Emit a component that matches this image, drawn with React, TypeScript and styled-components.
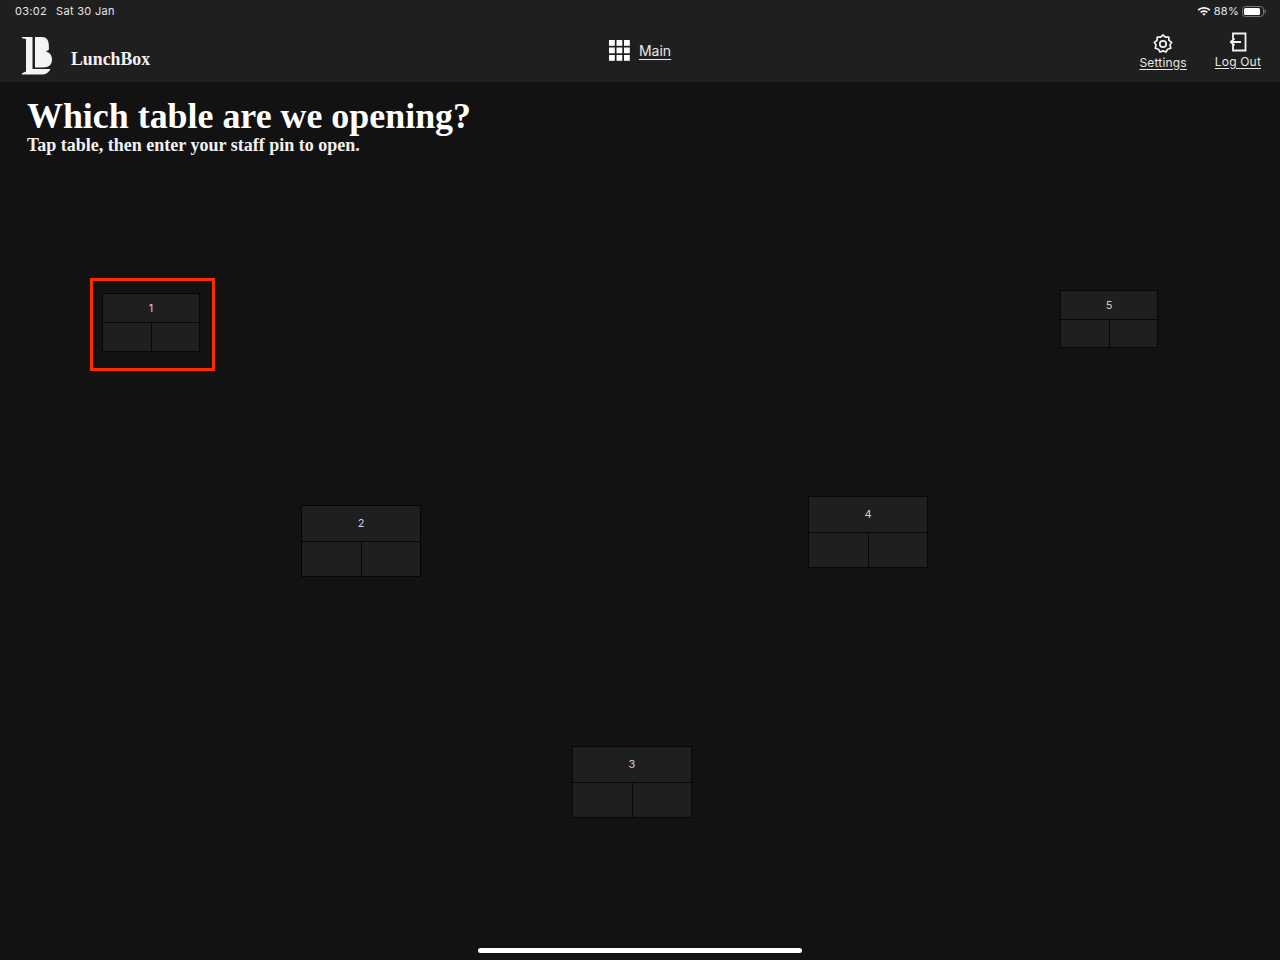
import React from "react";
import styled, { createGlobalStyle } from "styled-components";

const Global = createGlobalStyle`
  html, body { margin: 0; padding: 0; background: #121212; }
  body { font-family: "Inter", "Liberation Sans", sans-serif; color: #fff; }
`;

const Page = styled.div`
  width: 1280px;
  height: 960px;
  position: relative;
  overflow: hidden;
  background: #121212;
  display: flex;
  flex-direction: column;
`;

const Top = styled.header`
  height: 82px;
  background: #1f1f1f;
  display: flex;
  flex-direction: column;
  flex: none;
`;

const StatusBar = styled.div`
  height: 22px;
  padding: 0 14px 0 15px;
  display: flex;
  align-items: center;
  justify-content: space-between;
  font-size: 11px;
  letter-spacing: 0.3px;
  color: #e6e6e6;
`;

const StatusGroup = styled.div<{ $gap: number }>`
  display: flex;
  align-items: center;
  gap: ${(p) => p.$gap}px;
`;

const NavBar = styled.nav`
  flex: 1;
  display: grid;
  grid-template-columns: 1fr auto 1fr;
  align-items: center;
  padding: 0 19px 0 22px;
`;

const Brand = styled.div`
  display: flex;
  align-items: center;
  gap: 19px;
  padding-top: 8px;
`;

const BrandName = styled.span`
  font-family: "Liberation Serif", serif;
  font-weight: 700;
  font-size: 17.8px;
  color: #f2f2f2;
  padding-top: 6px;
`;

const MainLink = styled.a`
  display: flex;
  align-items: center;
  gap: 9px;
  color: #e8e8e8;
  font-size: 14px;
  padding-bottom: 4px;
  margin-left: -3px;
  span { text-decoration: underline; text-underline-offset: 3px; }
`;

const NavActions = styled.div`
  display: flex;
  justify-content: flex-end;
  align-items: flex-start;
  gap: 28px;
  padding-bottom: 3px;
`;

const NavAction = styled.a<{ $drop?: number; $gap: number }>`
  display: flex;
  flex-direction: column;
  align-items: center;
  gap: ${(p) => p.$gap}px;
  padding-top: ${(p) => p.$drop ?? 0}px;
  font-size: 12px;
  letter-spacing: 0.18px;
  color: #e8e8e8;
  span { text-decoration: underline; text-underline-offset: 2px; }
`;

const Intro = styled.section`
  padding: 13px 27px 0;
  font-family: "Liberation Serif", serif;
  font-weight: 700;
`;

const Title = styled.h1`
  margin: 0;
  font-size: 35.9px;
  line-height: 43px;
  color: #fff;
`;

const Subtitle = styled.p`
  margin: -4px 0 0;
  font-size: 18px;
  line-height: 22px;
  color: #f2f2f2;
`;

const Floor = styled.main`
  position: absolute;
  inset: 0;
  pointer-events: none;
`;

type TableProps = { $x: number; $y: number; $w: number; $h: number };

const TableCard = styled.div<TableProps>`
  position: absolute;
  left: ${(p) => p.$x}px;
  top: ${(p) => p.$y}px;
  width: ${(p) => p.$w}px;
  height: ${(p) => p.$h}px;
  box-sizing: border-box;
  display: grid;
  grid-template-columns: 1fr 1fr;
  grid-template-rows: 1fr 1fr;
  gap: 1px;
  background: #060606;
  border: 1px solid #060606;
`;

const TableName = styled.div`
  grid-column: 1 / 3;
  background: #1f1f1f;
  display: flex;
  align-items: center;
  justify-content: center;
  font-size: 11px;
  color: #d0d0d0;
`;

const Seat = styled.div`
  background: #1f1f1f;
`;

const Highlight = styled.div`
  position: absolute;
  left: 90px;
  top: 278px;
  width: 125px;
  height: 93px;
  box-sizing: border-box;
  border: 3px solid #ff2a00;
`;

const HomeIndicator = styled.div`
  position: absolute;
  left: 478px;
  bottom: 7px;
  width: 324px;
  height: 5px;
  border-radius: 3px;
  background: #fff;
`;

const Battery = styled.svg`
  display: block;
`;

const tables = [
  { name: "1", x: 102, y: 293, w: 98, h: 59 },
  { name: "2", x: 301, y: 505, w: 120, h: 72 },
  { name: "3", x: 572, y: 746, w: 120, h: 72 },
  { name: "4", x: 808, y: 496, w: 120, h: 72 },
  { name: "5", x: 1060, y: 290, w: 98, h: 58 },
];

const Logo = () => (
  <svg width="30" height="38" viewBox="0 0 30 38" fill="#f4f4f4">
    <path d="M0 0H10.5V32H28.5C27 35.5 24 37.5 20 37.5H0V36.2L4 34.5V2L0 1.2Z" />
    <path d="M13 0H20C24.5 0 26.6 3 26.8 7.5L27 12.5L24 14.5C27.5 15.5 30 18 30 22.5C30 27.5 27 30.5 21 30.5H13Z" />
  </svg>
);

const GridIcon = () => (
  <svg width="21" height="21" viewBox="0 0 21 21" fill="#fff">
    {[0, 7.5, 15].map((y) =>
      [0, 7.5, 15].map((x) => <rect key={`${x}-${y}`} x={x} y={y} width="5.8" height="5.8" />)
    )}
  </svg>
);

const GearIcon = () => (
  <svg width="20" height="20" viewBox="0 0 20 20" fill="none" stroke="#f2f2f2" strokeWidth="1.7" strokeLinejoin="round">
    <path d="M10 1L12.4 3.2L15.7 3.1L16 6.3L18.6 8.4L17 10.9L17.7 14.2L14.6 15.2L13 18L10 16.9L7 18L5.4 15.2L2.3 14.2L3 10.9L1.4 8.4L4 6.3L4.3 3.1L7.6 3.2Z" />
    <circle cx="10" cy="10" r="3.2" />
  </svg>
);

const LogoutIcon = () => (
  <svg width="20" height="20" viewBox="0 0 20 20" fill="none" stroke="#f2f2f2" strokeWidth="1.8">
    <path d="M5 7V1.5H17.5V18.5H5V13" />
    <path d="M13 10H2.5M6.5 6.5L2.8 10L6.5 13.5" />
  </svg>
);

const WifiIcon = () => (
  <svg width="14" height="10" viewBox="0 0 14 10" fill="#f2f2f2">
    <path d="M7 1C9.5 1 11.7 2 13.4 3.6L12.2 4.9C10.9 3.6 9 2.8 7 2.8S3.1 3.6 1.8 4.9L.6 3.6C2.3 2 4.5 1 7 1Z" />
    <path d="M7 4.2C8.6 4.2 10 4.8 11 5.8L9.8 7C9.1 6.4 8.1 6 7 6S4.9 6.4 4.2 7L3 5.8C4 4.8 5.4 4.2 7 4.2Z" />
    <path d="M7 7.2C7.7 7.2 8.3 7.5 8.8 7.9L7 9.8L5.2 7.9C5.7 7.5 6.3 7.2 7 7.2Z" />
  </svg>
);

export default function App() {
  return (
    <Page>
      <Global />
      <Top>
        <StatusBar>
          <StatusGroup $gap={9}>
            <span>03:02</span>
            <span>Sat 30 Jan</span>
          </StatusGroup>
          <StatusGroup $gap={3}>
            <WifiIcon />
            <span>88%</span>
            <Battery width="24" height="11" viewBox="0 0 24 11">
              <rect x="0.5" y="0.5" width="21" height="10" rx="3" fill="none" stroke="#777" />
              <rect x="2" y="2" width="16" height="7" rx="1.5" fill="#fff" />
              <rect x="22.5" y="3.5" width="1.2" height="4" rx="0.6" fill="#777" />
            </Battery>
          </StatusGroup>
        </StatusBar>
        <NavBar>
          <Brand>
            <Logo />
            <BrandName>LunchBox</BrandName>
          </Brand>
          <MainLink>
            <GridIcon />
            <span>Main</span>
          </MainLink>
          <NavActions>
            <NavAction $drop={2} $gap={1}>
              <GearIcon />
              <span>Settings</span>
            </NavAction>
            <NavAction $gap={2}>
              <LogoutIcon />
              <span>Log Out</span>
            </NavAction>
          </NavActions>
        </NavBar>
      </Top>
      <Intro>
        <Title>Which table are we opening?</Title>
        <Subtitle>Tap table, then enter your staff pin to open.</Subtitle>
      </Intro>
      <Floor>
        {tables.map((t) => (
          <TableCard key={t.name} $x={t.x} $y={t.y} $w={t.w} $h={t.h}>
            <TableName>{t.name}</TableName>
            <Seat />
            <Seat />
          </TableCard>
        ))}
        <Highlight />
      </Floor>
      <HomeIndicator />
    </Page>
  );
}
